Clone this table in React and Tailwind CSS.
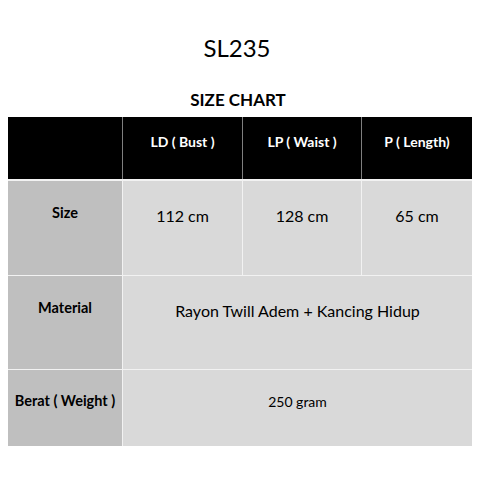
export default function App() {
  const font = { fontFamily: "Lato, 'Open Sans', sans-serif" };
  return (
    <div className="w-[480px] h-[480px] bg-white text-black" style={font}>
      <div className="pt-[32px] flex flex-col items-center">
        <div className="text-[24px] leading-[32px] pr-[6px]">SL235</div>
        <div className="mt-[24px] text-[17px] leading-[24px] font-bold pr-[4px]">SIZE CHART</div>
      </div>
      <div className="ml-[8px] mt-[5px] w-[464px] flex flex-col">
        <div className="flex h-[62px] bg-[#7f7f7f] gap-px">
          <div className="w-[114px] bg-black" />
          <div className="w-[119px] bg-black text-white font-bold text-[14px] leading-[20px] pt-[15px] text-center">LD ( Bust )</div>
          <div className="w-[118px] bg-black text-white font-bold text-[14px] leading-[20px] pt-[15px] text-center">LP ( Waist )</div>
          <div className="w-[110px] bg-black text-white font-bold text-[14px] leading-[20px] pt-[15px] text-center">P ( Length)</div>
        </div>
        <div className="h-[2px] bg-[#f2f2f2]" />
        <div className="flex h-[94px] gap-px bg-[#f2f2f2]">
          <div className="w-[114px] bg-[#bfbfbf] font-bold text-[14.5px] leading-[20px] pt-[22px] text-center">Size</div>
          <div className="w-[119px] bg-[#d9d9d9] text-[16px] leading-[24px] pt-[23px] text-center">112 cm</div>
          <div className="w-[118px] bg-[#d9d9d9] text-[16px] leading-[24px] pt-[23px] text-center">128 cm</div>
          <div className="w-[110px] bg-[#d9d9d9] text-[16px] leading-[24px] pt-[23px] text-center">65 cm</div>
        </div>
        <div className="h-px bg-[#f2f2f2]" />
        <div className="flex h-[93px] gap-px bg-[#f2f2f2]">
          <div className="w-[114px] bg-[#bfbfbf] font-bold text-[14.5px] leading-[20px] pt-[22px] text-center">Material</div>
          <div className="flex-1 bg-[#d9d9d9] text-[16px] leading-[24px] pt-[23px] text-center">Rayon Twill Adem + Kancing Hidup</div>
        </div>
        <div className="h-px bg-[#f2f2f2]" />
        <div className="flex h-[76px] gap-px bg-[#f2f2f2]">
          <div className="w-[114px] bg-[#bfbfbf] font-bold text-[14.5px] leading-[20px] pt-[21px] text-center">Berat ( Weight )</div>
          <div className="flex-1 bg-[#d9d9d9] text-[14px] leading-[24px] pt-[20px] text-center">250 gram</div>
        </div>
      </div>
    </div>
  );
}
